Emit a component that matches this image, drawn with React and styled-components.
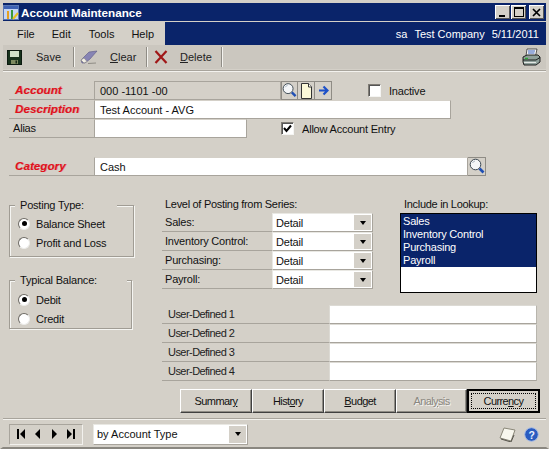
import React from "react";
import styled, { createGlobalStyle } from "styled-components";

const Global = createGlobalStyle`
  html, body { margin: 0; padding: 0; background: #d4d0c8; }
  body { font-family: "Liberation Sans", Arial, sans-serif; font-size: 11px; color: #111; letter-spacing: -.2px; }
  * { box-sizing: border-box; }
`;

const Win = styled.div`
  width: 549px; height: 449px; background: #d4d0c8; overflow: hidden;
  display: flex; flex-direction: column;
  border-style: solid; border-width: 3px 3px 2px 3px; border-color: #d4d0c8 #d4d0c8 #8a8780 #d4d0c8;
`;
const TitleBar = styled.div`
  height: 18px; flex: none; background: #0a246a; color: #fff; display: flex; align-items: center;
  font-weight: bold; font-size: 11.7px; letter-spacing: 0; gap: 1px; padding-right: 2px; margin-bottom: 1px;
`;
const TitleText = styled.span` flex: 1; `;
const WinButtons = styled.div` display: flex; gap: 1px; `;
const WinBtn = styled.div`
  width: 15px; height: 14px; background: #d4d0c8; margin-left: ${p => p.$gap || 0}px;
  display: flex; align-items: center; justify-content: center;
  box-shadow: inset 1px 1px 0 #fff, inset -1px -1px 0 #555;
`;
const MenuRow = styled.div`
  height: 23px; flex: none; display: flex; background: #0a246a; color: #fff;
  align-items: center; justify-content: flex-end; position: relative;
`;
const Menus = styled.div`
  width: 162px; height: 100%; background: #d4d0c8; color: #111; display: flex; align-items: center;
  margin-right: auto; letter-spacing: 0;
`;
const MenuItem = styled.span` margin-left: ${p => p.$ml}px; `;
const Session = styled.div` display: flex; gap: 7px; margin-right: 7px; letter-spacing: 0; `;
const Toolbar = styled.div`
  height: 25px; flex: none; background: #cbc7bf; display: flex; align-items: center;
  border-bottom: 1px solid #d4d0c8;
`;
const ToolBtn = styled.div`
  width: ${p => p.$w}px; height: 20px; display: flex; align-items: center; position: relative;
  padding-left: ${p => p.$pl}px;
  border-right: 1px solid #8f8c85; box-shadow: 1px 0 0 #f4f3ef;
`;
const ToolLabel = styled.span` margin-left: ${p => p.$ml}px; color: #222; letter-spacing: 0; `;
const Under = styled.span` text-decoration: underline; `;
const Spring = styled.div` flex: 1; `;
const PrinterWrap = styled.div` margin-right: 5px; display: flex; `;
const Rule = styled.div`
  height: 2px; flex: none; background: #f3f2ee; border-top: 1px solid #a8a49c;
`;
const Form = styled.div`
  flex: 1; padding: 9px 0 0 6px; display: flex; flex-direction: column;
`;
const Row = styled.div`
  height: 19px; display: flex; align-items: stretch; margin-bottom: ${p => p.$mb || 0}px;
`;
const LabelCell = styled.div`
  width: 85px; flex: none; display: flex; align-items: center; padding-left: 4px;
  border-bottom: 1px solid #a8a49c; ${p => p.$req && `
    color: #e0101c; font-weight: bold; font-style: italic; font-size: 11.5px; letter-spacing: .1px;
    text-shadow: 1px 0 0 rgba(224,16,28,.35); padding-left: 6px;
  `}
`;
const Input = styled.div`
  width: ${p => p.$w}px; flex: none; display: flex; align-items: center; padding-left: 5px;
  letter-spacing: 0;
  background: ${p => (p.$off ? "#d4d0c8" : "#fff")};
  border-top: 1px solid ${p => (p.$off ? "#a8a49c" : "#d4d0c8")};
  border-bottom: 1px solid #a8a49c; border-right: 1px solid #a8a49c;
  border-left: 1px solid #a8a49c;
`;
const IconBtn = styled.div`
  width: ${p => p.$w || 17}px; flex: none; display: flex; align-items: center; justify-content: center;
  border: 1px solid #8f8c85; border-left-width: ${p => (p.$first ? 1 : 0)}px; background: #d4d0c8;
`;
const Check = styled.div`
  width: 13px; height: 13px; flex: none; background: #fff; display: flex; align-items: center; justify-content: center;
  border: 1px solid; border-color: #807c75 #f5f5f3 #f5f5f3 #807c75;
  box-shadow: inset 1px 1px 0 #555;
`;
const CheckLabel = styled.div`
  display: flex; align-items: center; gap: 8px; margin-left: ${p => p.$ml}px;
`;
const Lower = styled.div`
  display: grid; grid-template-columns: 153px 238px 137px; margin-top: 23px;
`;
const Left = styled.div` display: flex; flex-direction: column; gap: 17px; `;
const Group = styled.fieldset`
  margin: 0; width: ${p => p.$w}px; height: ${p => p.$h}px; padding: ${p => p.$pt}px 0 0 8px;
  border: 1px solid #a09c94; box-shadow: 1px 1px 0 #f5f5f2, inset 1px 1px 0 #f5f5f2;
`;
const Legend = styled.legend`
  padding: 0 0 0 5px; margin-left: -3px; width: ${p => p.$w}px; height: 13px; line-height: 13px;
  background: #d4d0c8; position: relative;
`;
const RadioRow = styled.div` height: 19px; display: flex; align-items: center; gap: 6px; `;
const RadioDot = styled.div`
  width: 12px; height: 12px; border-radius: 50%; background: #fff; flex: none;
  display: flex; align-items: center; justify-content: center;
  border: 1px solid; border-color: #6d6a64 #ececea #ececea #6d6a64;
  &::after { content: ""; width: 5px; height: 5px; border-radius: 50%; background: ${p => (p.$on ? "#000" : "transparent")}; }
`;
const Mid = styled.div` display: flex; flex-direction: column; `;
const SubHead = styled.div`
  height: 13px; line-height: 13px; padding-left: ${p => p.$pl}px; margin-top: -1px; margin-bottom: 2px; letter-spacing: -.3px;
`;
const SeriesRow = styled.div`
  height: 19px; display: flex; width: 211px;
`;
const SeriesLabel = styled.div`
  width: 110px; flex: none; border-bottom: 1px solid #a8a49c; padding-left: 3px; display: flex; align-items: center;
`;
const Select = styled.div`
  width: ${p => p.$w}px; flex: none; height: ${p => p.$h || 19}px; background: #fff; display: flex; align-items: center;
  padding-left: ${p => p.$pl || 3}px; border: 1px solid #e9e8e3; border-bottom-color: #a8a49c; border-right-color: #a8a49c;
  justify-content: space-between;
`;
const Arrow = styled.div`
  width: 17px; align-self: stretch; background: #d4d0c8; display: flex; align-items: center; justify-content: center;
  margin: 1px;
  &::after { content: ""; border: 3.5px solid transparent; border-top: 4px solid #000; border-bottom-width: 0; }
`;
const UserRows = styled.div` margin-top: 16px; width: 375px; `;
const UserRow = styled.div` height: 19px; display: flex; `;
const UserLabel = styled.div`
  width: 167px; flex: none; padding-left: 6px; display: flex; align-items: center; border-bottom: 1px solid #a8a49c;
  color: #222; letter-spacing: -.55px;
`;
const UserInput = styled.div`
  width: 208px; flex: none; background: #fff; border: 1px solid #dcdad4; border-bottom-color: #a8a49c; border-right-color: #b8b5ad;
`;
const List = styled.div`
  width: 137px; height: 80px; background: #fff; border: 1px solid #000; overflow: hidden;
`;
const ListSel = styled.div`
  background: #0a246a; color: #fff; height: 53px; padding: 1px 0 0 2px; overflow: hidden; line-height: 13px;
`;
const Buttons = styled.div`
  display: flex; margin: 8px 0 0 171px; align-items: stretch; height: 24px; letter-spacing: -.6px;
`;
const Btn = styled.div`
  width: ${p => p.$w}px; display: flex; align-items: center; justify-content: center; position: relative;
  color: ${p => (p.$dis ? "#8a8780" : "#111")};
  ${p => p.$dis && "text-shadow: 1px 1px 0 #f4f3f0;"}
  border: 1px solid; border-color: #fff #404040 #404040 #fff;
  box-shadow: inset -1px -1px 0 #8f8c85;
  ${p => p.$def && `
    border: 2px solid #000; box-shadow: none;
    &::after { content: ""; position: absolute; inset: 2px; border: 1px dotted #000; }
  `}
`;
const Footer = styled.div`
  height: 27px; flex: none; display: flex; align-items: center; padding: 1px 0 0 6px;
`;
const Nav = styled.div`
  width: 74px; height: 21px; display: flex; align-items: center; justify-content: space-around; padding: 0 3px;
  border: 1px solid; border-color: #a8a49c #f2f1ed #f2f1ed #a8a49c;
`;
const FootSelect = styled(Select)` margin-left: 10px; border-color: #e9e8e3 #a8a49c #a8a49c #e9e8e3; letter-spacing: 0; `;
const FootIcons = styled.div` display: flex; gap: 7px; margin-right: 7px; margin-left: auto; align-items: center; `;

const Glass = () => (
  <svg width="16" height="17" viewBox="0 0 16 17">
    <circle cx="6.5" cy="6.5" r="5.3" fill="#f4f6f8" stroke="#3a4650" strokeWidth="1" />
    <path d="M3.5 5 A3.5 3.5 0 0 1 6 3" stroke="#a8b4c0" fill="none" />
    <path d="M10.5 10.5 L14.5 14.5" stroke="#1f4fb4" strokeWidth="2.6" />
  </svg>
);
const NoteIcon = () => (
  <svg width="13" height="16" viewBox="0 0 13 16">
    <path d="M1.5 .5 H8.5 L11.5 4 V15.5 H1.5Z" fill="#fbf8d8" stroke="#333" />
    <path d="M8.5 .5 V4 H11.5" fill="#fff" stroke="#333" />
  </svg>
);
const BlueArrow = () => (
  <svg width="11" height="11" viewBox="0 0 11 11">
    <path d="M1 5.5 H8 M5.5 1.5 L9.5 5.5 L5.5 9.5" stroke="#1c50c8" strokeWidth="2.2" fill="none" />
  </svg>
);
const Floppy = () => (
  <svg width="15" height="15" viewBox="0 0 15 15">
    <rect x=".5" y=".5" width="14" height="14" fill="#18321c" stroke="#0c1a10" />
    <rect x="3" y="1" width="9" height="6" fill="#cfe0c8" />
    <rect x="4" y="10" width="7" height="4" fill="#7e8a60" />
    <rect x="8.5" y="10.5" width="1.5" height="3" fill="#1a2a18" />
  </svg>
);
const Eraser = () => (
  <svg width="18" height="15" viewBox="0 0 18 15">
    <path d="M1 10 L9 2 L17 1 L10 9 L5 13 L2 13Z" fill="#8784b4" stroke="#5a5784" strokeWidth=".6" />
    <path d="M1 10 L4 13 L7 11.5 L4 8Z" fill="#f2efe6" stroke="#87857c" strokeWidth=".6" />
    <path d="M8 13.5 L16 13" stroke="#8f8c85" />
  </svg>
);
const RedX = () => (
  <svg width="14" height="14" viewBox="0 0 14 14">
    <path d="M1.5 1 L12.5 13 M12.5 1 L1.5 13" stroke="#a01818" strokeWidth="2.2" />
  </svg>
);
const Printer = () => (
  <svg width="19" height="19" viewBox="0 0 19 19">
    <path d="M5 1 H15 L13.5 8 H4Z" fill="#f6f6f6" stroke="#333" strokeWidth=".8" />
    <path d="M6 3 H13 M6 5 H12.5" stroke="#3a62c0" />
    <path d="M1 9 L5 7 H16 L18 9 V14 L14 17 H2 L1 14Z" fill="#8fa09a" stroke="#111" strokeWidth=".9" />
    <path d="M1 12 H14 L18 9.5" stroke="#111" strokeWidth=".9" fill="none" />
    <path d="M3 10.5 H6" stroke="#2ea838" strokeWidth="1.4" />
    <path d="M2 14.5 H14" stroke="#e4e7e4" />
  </svg>
);
const AppIcon = () => (
  <svg width="17" height="17" viewBox="0 0 17 17">
    <rect x=".5" y="1.5" width="15" height="14" fill="#c6d6f2" stroke="#5a78b4" />
    <rect x="1" y="2" width="14" height="3" fill="#3e62b4" />
    <rect x="4" y="7" width="2" height="8" fill="#e4a020" />
    <rect x="8" y="6" width="2" height="9" fill="#3a9a3a" />
    <path d="M10 15 L15 9" stroke="#e8c020" strokeWidth="2" />
  </svg>
);
const Book = () => (
  <svg width="19" height="15" viewBox="0 0 19 15">
    <path d="M6 1 L17 3 L13 14 L2 11Z" fill="#f8f7ee" stroke="#8a8778" />
    <path d="M3 12 L13 15 L16 8" stroke="#55534b" fill="none" strokeWidth="1" />
  </svg>
);
const Help = () => (
  <svg width="15" height="15" viewBox="0 0 15 15">
    <circle cx="7.5" cy="7.5" r="6.8" fill="#2a5cc0" stroke="#a8bce4" />
    <text x="7.5" y="11.5" textAnchor="middle" fontSize="10.5" fontWeight="bold" fill="#e8f0ff" fontFamily="Liberation Sans">?</text>
  </svg>
);
const NavIcon = ({ d }) => (
  <svg width="9" height="10" viewBox="0 0 9 10"><path d={d} fill="#000" /></svg>
);

const Radio = ({ on, children }) => (
  <RadioRow><RadioDot $on={on} /><span>{children}</span></RadioRow>
);

const series = ["Sales:", "Inventory Control:", "Purchasing:", "Payroll:"];
const users = [1, 2, 3, 4];

export default function App() {
  return (
    <Win>
      <Global />
      <TitleBar>
        <AppIcon />
        <TitleText>Account Maintenance</TitleText>
        <WinButtons>
          <WinBtn><svg width="9" height="9"><rect x="1" y="7" width="6" height="2" fill="#000" /></svg></WinBtn>
          <WinBtn><svg width="10" height="10"><rect x=".5" y=".5" width="9" height="9" fill="none" stroke="#000" /><rect x="0" y="0" width="10" height="2" /></svg></WinBtn>
          <WinBtn $gap={2}><svg width="9" height="9"><path d="M1 1 L8 8 M8 1 L1 8" stroke="#000" strokeWidth="1.7" /></svg></WinBtn>
        </WinButtons>
      </TitleBar>
      <MenuRow>
        <Menus>
          <MenuItem $ml={14}>File</MenuItem>
          <MenuItem $ml={17}>Edit</MenuItem>
          <MenuItem $ml={18}>Tools</MenuItem>
          <MenuItem $ml={17}>Help</MenuItem>
        </Menus>
        <Session><span>sa</span><span>Test Company</span><span>5/11/2011</span></Session>
      </MenuRow>
      <Toolbar>
        <ToolBtn $w={71} $pl={4}><Floppy /><ToolLabel $ml={14}>Save</ToolLabel></ToolBtn>
        <ToolBtn $w={73} $pl={6}><Eraser /><ToolLabel $ml={12}><Under>C</Under>lear</ToolLabel></ToolBtn>
        <ToolBtn $w={75} $pl={7}><RedX /><ToolLabel $ml={12}><Under>D</Under>elete</ToolLabel></ToolBtn>
        <Spring />
        <PrinterWrap><Printer /></PrinterWrap>
      </Toolbar>
      <Rule />
      <Form>
        <Row>
          <LabelCell $req>Account</LabelCell>
          <Input $off $w={187}>000 -1101 -00</Input>
          <IconBtn $first><Glass /></IconBtn>
          <IconBtn><NoteIcon /></IconBtn>
          <IconBtn><BlueArrow /></IconBtn>
          <CheckLabel $ml={36}><Check /><span>Inactive</span></CheckLabel>
        </Row>
        <Row>
          <LabelCell $req>Description</LabelCell>
          <Input $w={357}>Test Account - AVG</Input>
        </Row>
        <Row $mb={19}>
          <LabelCell>Alias</LabelCell>
          <Input $w={153} />
          <CheckLabel $ml={34}>
            <Check><svg width="9" height="9"><path d="M1 4 L3.5 7 L8 1.5" stroke="#000" strokeWidth="2" fill="none" /></svg></Check>
            <span>Allow Account Entry</span>
          </CheckLabel>
        </Row>
        <Row>
          <LabelCell $req>Category</LabelCell>
          <Input $w={374}>Cash</Input>
          <IconBtn $w={18}><Glass /></IconBtn>
        </Row>
        <Lower>
          <Left>
            <Group $w={125} $h={58} $pt={2}>
              <Legend $w={102}>Posting Type:</Legend>
              <Radio on>Balance Sheet</Radio>
              <Radio>Profit and Loss</Radio>
            </Group>
            <Group $w={123} $h={55} $pt={3}>
              <Legend $w={112}>Typical Balance:</Legend>
              <Radio on>Debit</Radio>
              <Radio>Credit</Radio>
            </Group>
          </Left>
          <Mid>
            <SubHead $pl={3}>Level of Posting from Series:</SubHead>
            {series.map(s => (
              <SeriesRow key={s}>
                <SeriesLabel>{s}</SeriesLabel>
                <Select $w={101}>Detail<Arrow /></Select>
              </SeriesRow>
            ))}
            <UserRows>
              {users.map(n => (
                <UserRow key={n}>
                  <UserLabel>User-Defined {n}</UserLabel>
                  <UserInput />
                </UserRow>
              ))}
            </UserRows>
          </Mid>
          <div>
            <SubHead $pl={4}>Include in Lookup:</SubHead>
            <List>
              <ListSel>
                <div>Sales</div>
                <div>Inventory Control</div>
                <div>Purchasing</div>
                <div>Payroll</div>
              </ListSel>
            </List>
          </div>
        </Lower>
        <Buttons>
          <Btn $w={72}>Summar<Under>y</Under></Btn>
          <Btn $w={72}>Hist<Under>o</Under>ry</Btn>
          <Btn $w={72}><Under>B</Under>udget</Btn>
          <Btn $w={71} $dis>Anal<Under>y</Under>sis</Btn>
          <Btn $w={73} $def>Curre<Under>n</Under>cy</Btn>
        </Buttons>
      </Form>
      <Rule />
      <Footer>
        <Nav>
          <NavIcon d="M0 0H2V10H0Z M8 0V10L3 5Z" />
          <NavIcon d="M7 0V10L2 5Z" />
          <NavIcon d="M2 0V10L7 5Z" />
          <NavIcon d="M1 0V10L6 5Z M7 0H9V10H7Z" />
        </Nav>
        <FootSelect $w={155} $h={21} $pl={3}>by Account Type<Arrow /></FootSelect>
        <FootIcons><Book /><Help /></FootIcons>
      </Footer>
    </Win>
  );
}
